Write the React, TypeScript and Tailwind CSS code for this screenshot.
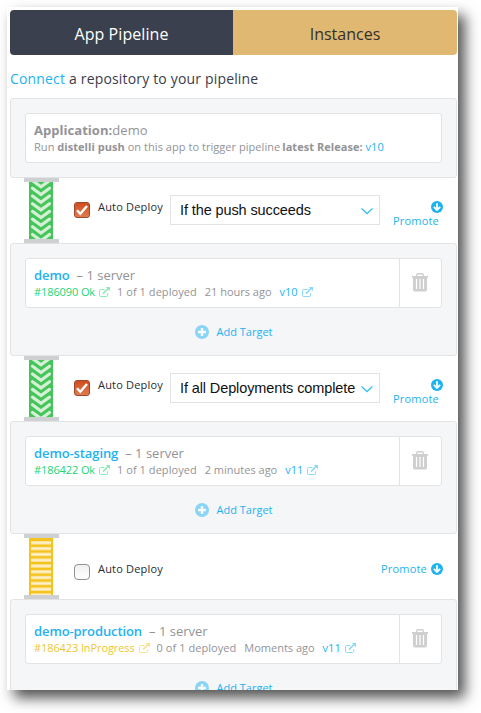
import React, { ReactNode } from "react";

function External({ className }: { className: string }) {
  return (
    <svg className={"h-[11px] w-[11px] shrink-0 " + className} viewBox="0 0 11 11" fill="none" stroke="currentColor">
      <path d="M5.5 2.5H1.8Q.5 2.5 .5 3.7V8.2Q.5 9.5 1.8 9.5H7.4Q8.7 9.5 8.7 8.2V6.2" />
      <path d="M4 6.6L9 1.6" strokeWidth="1.5" />
      <path d="M6.8 0H11V4.2Z" fill="currentColor" stroke="none" />
    </svg>
  );
}

function Plus() {
  return (
    <svg className="h-[14px] w-[14px]" viewBox="0 0 14 14">
      <circle cx="7" cy="7" r="7" fill="#8ad4f5" />
      <path d="M7 3V11M3 7H11" stroke="#f8fbfd" strokeWidth="2.4" />
    </svg>
  );
}

function Down() {
  return (
    <svg className="h-3 w-3" viewBox="0 0 12 12" fill="none">
      <circle cx="6" cy="6" r="6" fill="#1db2f0" />
      <path d="M6 2.2V9M2.8 5.8L6 9L9.2 5.8" stroke="white" strokeWidth="1.8" />
    </svg>
  );
}

function Trash() {
  return (
    <svg className="h-[19px] w-4" viewBox="0 0 16 19" fill="none">
      <path d="M4.8 3V2Q4.8 .8 6 .8H10Q11.2 .8 11.2 2V3" stroke="#cfcfcf" strokeWidth="1.4" />
      <path d="M0 3H16V4.8H15V16.5Q15 18.5 13 18.5H3Q1 18.5 1 16.5V4.8H0Z" fill="#cfcfcf" />
      <path d="M4.5 6V16M8 6V16M11.5 6V16" stroke="white" strokeWidth="1.2" />
    </svg>
  );
}

function Pipe({ busy }: { busy?: boolean }) {
  const rows = [-9.1, -1.4, 6.3, 14, 21.7, 29.4, 37.1, 44.8, 52.5];
  const bars = Array.from({ length: 10 }, (_, i) => 3 + i * 5.8);
  return (
    <div className="flex w-[35px] shrink-0 flex-col">
      <div className="h-1 w-full bg-[#cfd0d2]" />
      <svg className="ml-[5px] h-[57px] w-6" viewBox="0 0 24 57" fill="none">
        <rect width="24" height="57" fill={busy ? "#f4c41c" : "#45c459"} />
        {busy
          ? bars.map((y) => (
              <g key={y}>
                <rect x="2" y={y} width="20" height="3.6" fill="#fae29a" />
                <rect x="2" y={y + 1} width="20" height="1.5" fill="#fff0c9" />
              </g>
            ))
          : rows.map((y) => (
              <path key={y} d={`M3.5 ${y}L12 ${y + 6.2}L20.5 ${y}`} stroke="#d4f0d5" strokeWidth="3.2" strokeLinecap="round" />
            ))}
      </svg>
      <div className="h-1 w-full bg-[#cfd0d2]" />
    </div>
  );
}

function Checkbox({ on }: { on: boolean }) {
  return on ? (
    <div className="h-4 w-4 rounded-[3px] border border-[#9d482a] bg-linear-to-b from-[#cf4c1d] to-[#df7c50]">
      <svg className="h-[14px] w-[14px]" viewBox="0 0 14 14" fill="none">
        <path d="M2 7.2L5.300 10.800L12 3" stroke="white" strokeWidth="2.400" />
      </svg>
    </div>
  ) : (
    <div className="h-4 w-4 rounded-[4px] border border-[#929292] bg-linear-to-b from-[#f0f0f0] to-white" />
  );
}

function Connector({ choice }: { choice?: string }) {
  return (
    <div className="flex h-[65px] pl-[14px]">
      <Pipe busy={!choice} />
      <div className={choice ? "ml-[15px] pt-6" : "ml-[15px] pt-[30px]"}>
        <Checkbox on={!!choice} />
      </div>
      <div className={"ml-2 w-[72px] text-[11px] leading-4 tracking-[0.18px] whitespace-nowrap text-[#2b2b2f] " + (choice ? "pt-[21px]" : "pt-[27px]")}>
        Auto Deploy
      </div>
      {choice ? (
        <>
          <div className="mt-[17px] flex h-[30px] w-[210px] items-center justify-between border border-[#e2e3e5] pr-[6px] pl-[9px] font-['Liberation_Sans',sans-serif] text-[14.5px] tracking-[-0.11px] whitespace-nowrap text-[#111]">
            <span className="pt-px">{choice}</span>
            <svg className="mt-px h-2 w-3" viewBox="0 0 12 8" fill="none">
              <path d="M.5 1.5L6 6.5L11.5 1.5" stroke="#35c0f5" strokeWidth="1.3" />
            </svg>
          </div>
          <div className="mt-[23px] ml-[13px] flex w-[50px] flex-col items-end text-[11px] leading-4 text-[#1db2f0]">
            <Down />
            <span className="mr-1 tracking-[0.2px]">Promote</span>
          </div>
        </>
      ) : (
        <div className="mt-[27px] ml-auto flex h-4 items-center gap-1 pr-[14px] text-[11px] text-[#1db2f0]">
          <span className="tracking-[0.2px]">Promote</span>
          <Down />
        </div>
      )}
    </div>
  );
}

function Panel({ children }: { children: ReactNode }) {
  return <div className="rounded-[3px] border border-[#e2e3e5] bg-[#f5f6f8] px-[14px] pt-[14px]">{children}</div>;
}

type TargetProps = { name: string; build: string; busy?: boolean; count: string; when: string; version: string };

function Target({ name, build, busy, count, when, version }: TargetProps) {
  return (
    <Panel>
      <div className="flex h-[50px] rounded-[3px] border border-[#e2e3e5] bg-white">
        <div className="flex-1 pt-2 pl-2 whitespace-nowrap text-[#939397]">
          <div className="text-[13px] leading-[17px]">
            <span className="mr-[7px] font-semibold tracking-[-0.1px] text-[#1db2f0]">{name}</span>
            <span>– 1 server</span>
          </div>
          <div className="flex items-center text-[11px] leading-4">
            <span className={busy ? "tracking-[-0.1px] text-[#efc62f]" : "tracking-[-0.1px] text-[#20d676]"}>{build}</span>
            <External className={busy ? "ml-1 text-[#f7e08c]" : "ml-1 text-[#8beab8]"} />
            <span className="ml-[7px] tracking-[0.05px]">{count}</span>
            <span className="ml-2">{when}</span>
            <span className="ml-2 text-[#1db2f0]">{version}</span>
            <External className="ml-1 text-[#8dd8f8]" />
          </div>
        </div>
        <div className="flex w-[42px] items-center justify-center border-l border-[#e2e3e5] pr-px pb-px">
          <Trash />
        </div>
      </div>
      <div className="flex h-[47px] items-center justify-center gap-[7px] pl-px text-[11px] text-[#1db2f0]">
        <Plus />
        <span className="pt-px">Add Target</span>
      </div>
    </Panel>
  );
}

export default function App() {
  return (
    <div className="h-[713px] w-[481px] overflow-hidden bg-white pt-[7px] pl-[7px] font-['Open_Sans',sans-serif]">
      <div className="h-[683px] w-[451px] bg-white shadow-[7px_8px_13px_rgba(0,0,0,0.68)]">
        <div className="h-[683px] overflow-hidden pt-[3px] pr-px pl-[3px]">
          <div className="flex h-[45px] overflow-hidden rounded-[4px] text-center text-[16px] leading-[48px]">
            <div className="w-[223px] bg-[#3a404d] tracking-[0.08px] text-white">App Pipeline</div>
            <div className="flex-1 bg-[#e0b872] text-[#33302b]">Instances</div>
          </div>
          <div className="h-[43px] pt-[14px] text-[14px] leading-[20px] tracking-[0.17px] text-[#3a3d49]">
            <span className="text-[#1db2f0]">Connect</span> a repository to your pipeline
          </div>
          <Panel>
            <div className="mb-[14px] h-[50px] rounded-[3px] border border-[#e2e3e5] bg-white pt-2 pl-2 whitespace-nowrap text-[#939397]">
              <div className="text-[13px] leading-[17px] tracking-[0.04px]"><b>Application:</b>demo</div>
              <div className="text-[11px] leading-4 tracking-[0.045px]">
                Run <b>distelli push</b> on this app to trigger pipeline<b className="ml-[2px]">latest Release:</b>{" "}
                <span className="text-[#1db2f0]">v10</span>
              </div>
            </div>
          </Panel>
          <Connector choice="If the push succeeds" />
          <Target name="demo" build="#186090 Ok" count="1 of 1 deployed" when="21 hours ago" version="v10" />
          <Connector choice="If all Deployments complete" />
          <Target name="demo-staging" build="#186422 Ok" count="1 of 1 deployed" when="2 minutes ago" version="v11" />
          <Connector />
          <Target name="demo-production" build="#186423 InProgress" busy count="0 of 1 deployed" when="Moments ago" version="v11" />
        </div>
      </div>
    </div>
  );
}
